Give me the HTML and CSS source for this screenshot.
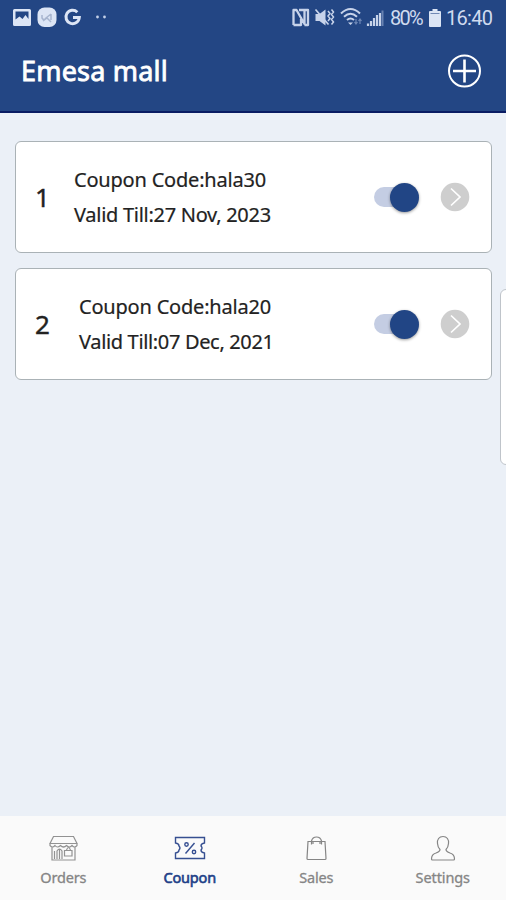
FILE: index.html
```html
<!DOCTYPE html>
<html lang="en">
<head>
<meta charset="utf-8">
<title>Emesa mall</title>
<link rel="stylesheet" href="styles.css">
</head>
<body>
<div class="app">
  <header class="header">
    <div class="status">
      <svg class="status-left" width="110" height="36" viewBox="0 0 110 36">
        <path fill="#dce5f5" fill-rule="evenodd" d="M14.500 9h15a1.500 1.500 0 0 1 1.500 1.500v14a1.500 1.500 0 0 1-1.500 1.500h-15a1.500 1.500 0 0 1-1.500-1.500v-14A1.500 1.500 0 0 1 14.500 9zM15.500 11.500v8l4-3 3 2.500 3-4 3 4v-7.500z"/>
        <rect x="37.500" y="7.500" width="19" height="19.500" rx="7" fill="#dce5f5"/>
        <path d="M42 15v3q2 3 4 0l5-4M43 21l4-3 4 4M51 14v6" fill="none" stroke="#a7b5cf" stroke-width="1.500"/>
        <path d="M77.300 12.200A6.700 6.700 0 1 0 79.300 17.500H73" fill="none" stroke="#dce5f5" stroke-width="3"/>
        <circle cx="97.500" cy="17" r="1.400" fill="#c3d0e8"/><circle cx="104.500" cy="17" r="1.400" fill="#c3d0e8"/>
      </svg>
      <div class="status-right">
        <svg width="93" height="36" viewBox="291 0 93 36">
          <path d="M293.500 25V10h3l8 14V11M299 10h9v15h-3.500M293.500 25h7.500V17" fill="none" stroke="#c7d3ea" stroke-width="2.300" stroke-linejoin="round"/>
          <path d="M315.500 14h4l6-4.500v16l-6-4.500h-4z" fill="#c7d3ea"/>
          <path d="M315.500 9.500l13 15" stroke="#c7d3ea" stroke-width="1.700"/>
          <path d="M328 11l2 2.500-2 2.500 2 2.500-2 2.500M331.500 9.500l2 2.500-2 2.500 2 2.500-2 2.500 2 2.500-2 2.500" fill="none" stroke="#c7d3ea" stroke-width="1.500"/>
          <path d="M341 13.500q9.500-9 19 0M344 16.800q6.500-6 13 0M347 20q3.500-3 7 0" fill="none" stroke="#c7d3ea" stroke-width="2"/>
          <path d="M348 22.500h5l-2.500 2.500z" fill="#c7d3ea"/>
          <path d="M356 19v5M354.500 22l1.500 2 1.500-2M360 24v-5M358.500 21l1.500-2 1.500 2" fill="none" stroke="#6e87b5" stroke-width="1.200"/>
          <path d="M368 26v-2.500M371 26v-5M374 26v-8M377 26v-11M380 26v-13" stroke="#c7d3ea" stroke-width="2.200"/>
          <path d="M382.500 26V10.500" stroke="#6882b2" stroke-width="2"/>
        </svg>
        <span class="battery-text">80%</span>
        <svg class="battery" width="12" height="18" viewBox="0 0 12 18"><path fill="#dce5f5" d="M3.500 0h5v2H11q1 0 1 1v14q0 1-1 1H1q-1 0-1-1V3q0-1 1-1h2.500z"/><path d="M1.500 4.500h9" stroke="#7189b5"/></svg>
        <span class="clock">16:40</span>
      </div>
    </div>
    <div class="titlebar">
      <h1 class="title">Emesa mall</h1>
      <svg width="34" height="34" viewBox="0 0 34 34" fill="none" stroke="#fff"><circle cx="17.500" cy="17" r="15.500" stroke-width="2"/><path d="M17.500 5.500v23M6 17h23" stroke-width="2.600"/></svg>
    </div>
  </header>
  <main class="list">
    <article class="card">
      <div class="index">1</div>
      <div class="info"><p class="code">Coupon Code:hala30</p><p class="date">Valid Till:27 Nov, 2023</p></div>
      <div class="toggle"><span class="knob"></span></div>
      <svg class="arrow" width="30" height="30" viewBox="0 0 30 30" fill="none"><circle cx="15" cy="15" r="14.300" fill="#cecece"/><path d="M11 6.500l9 8.500-9 8.500" stroke="#fff" stroke-width="1.700"/></svg>
    </article>
    <article class="card">
      <div class="index index-wide">2</div>
      <div class="info"><p class="code">Coupon Code:hala20</p><p class="date date-long">Valid Till:07 Dec, 2021</p></div>
      <div class="toggle"><span class="knob"></span></div>
      <svg class="arrow" width="30" height="30" viewBox="0 0 30 30" fill="none"><circle cx="15" cy="15" r="14.300" fill="#cecece"/><path d="M11 6.500l9 8.500-9 8.500" stroke="#fff" stroke-width="1.700"/></svg>
    </article>
  </main>
  <nav class="nav">
    <a class="tab">
      <svg width="34" height="30" viewBox="0 0 34 30" fill="none" stroke="#929292" stroke-width="1.200"><path d="M7.500 3.500h20l3.500 7H4zM4 10.500v2q2.500 3 5 0 2.200 3 5.500 0 3 3 6 0 3 3 5.500 0 2.500 3 5 0v-2M6 14.500V27h23V14.500M11 26v-8q2.500-4 5 0v8M13.500 16v10M18.500 17.500H26V23h-7.500zM20.500 17q2-5 4 0M8.500 26v-8"/></svg>
      <span class="label">Orders</span>
    </a>
    <a class="tab active">
      <svg width="34" height="30" viewBox="0 0 34 30" fill="none" stroke="#364f91" stroke-width="1.400"><path d="M2.500 4.500h29v5.500q-3.500.5-3.500 3 2 2 0 4 0 2.500 3.500 3v5.500h-29V20q3.500-.5 3.500-3 2-2 0-4 0-2.500-3.500-3z"/><path d="M21.500 10L12.500 20.500"/><circle cx="13.500" cy="11.500" r="1.700"/><circle cx="21" cy="19" r="1.700"/></svg>
      <span class="label">Coupon</span>
    </a>
    <a class="tab">
      <svg width="34" height="30" viewBox="0 0 34 30" fill="none" stroke="#858585" stroke-width="1.200"><path d="M9 8.500h17l1 17q0 1-1 1H9q-1 0-1-1zM12.500 11.500V8q1-4 5-4t5 4v3.500M14 11V8.500M21 11V8.500"/></svg>
      <span class="label">Sales</span>
    </a>
    <a class="tab">
      <svg width="34" height="30" viewBox="0 0 34 30" fill="none" stroke="#858585" stroke-width="1.200"><path d="M17 3.500c-4 0-6 3-5.500 7 .2 3 1 4.500 2.500 6 0 2-1 2.500-4 3.500-3.500 1-4.500 3-4.500 6q0 1 1 1h21q1 0 1-1c0-3-1-5-4.500-6-3-1-4-1.500-4-3.500 1.500-1.500 2.300-3 2.500-6 .500-4-1.500-7-5.500-7z"/></svg>
      <span class="label label-long">Settings</span>
    </a>
  </nav>
  <div class="edge-handle"></div>
</div>
</body>
</html>
```
FILE: styles.css
```css
* { box-sizing: border-box; }
body { margin: 0; font-family: "Noto Sans", sans-serif; }
p, h1 { margin: 0; }
.app { position: relative; width: 506px; height: 900px; display: flex; flex-direction: column; background: #ebf0f7; overflow: hidden; }
.header { height: 113px; flex: none; background: #234684; border-bottom: 2px solid #0a1c63; }
.status { height: 36px; display: flex; justify-content: space-between; padding-right: 14px; }
.status-right { display: flex; align-items: center; font-family: Roboto, sans-serif; font-size: 20px; line-height: 36px; color: #d0dbef; white-space: nowrap; }
.battery-text { width: 36px; margin-left: 6px; letter-spacing: -1.7px; }
.battery { margin-left: 3px; }
.clock { width: 46px; margin-left: 5px; letter-spacing: -0.7px; }
.titlebar { height: 70px; display: flex; align-items: center; justify-content: space-between; padding: 0 25px 0 21px; }
.title { color: #fff; font-size: 27px; font-weight: 400; -webkit-text-stroke: 0.8px #fff; line-height: 36px; letter-spacing: 0.2px; }
.list { flex: 1; display: flex; flex-direction: column; gap: 15px; padding: 28px 14px 0 15px; }
.card { height: 112px; display: flex; align-items: center; background: #fff; border: 1.5px solid #aab2b6; border-radius: 6px; padding: 0 21px 0 19px; }
.index { width: 39px; font-size: 26px; -webkit-text-stroke: 0.4px #222; line-height: 36px; color: #222; }
.index-wide { width: 44px; }
.info { flex: 1; font-size: 20px; line-height: 35px; color: #222; -webkit-text-stroke: 0.2px #222; white-space: nowrap; }
.code { letter-spacing: -0.2px; }
.date { letter-spacing: -0.28px; }
.date-long { letter-spacing: -0.34px; }
.toggle { width: 45px; height: 30px; display: flex; align-items: center; justify-content: flex-end; margin-right: 21px; position: relative; }
.toggle::before { content: ""; position: absolute; left: 0; top: 5px; width: 36px; height: 20px; border-radius: 10px; background: #c4cde3; }
.knob { position: relative; width: 29px; height: 29px; border-radius: 50%; background: #214585; box-shadow: 0 1px 3px rgba(0,0,0,.4); }
.nav { height: 84px; flex: none; display: grid; grid-template-columns: repeat(4, 1fr); background: #fafafa; }
.tab { display: flex; flex-direction: column; align-items: center; padding-top: 17px; color: #858585; }
.label { font-size: 14.5px; line-height: 20px; margin-top: 4px; -webkit-text-stroke: 0.3px currentColor; letter-spacing: -0.2px; }
.label-long { letter-spacing: -0.1px; }
.active { color: #213f88; }
.active .label { -webkit-text-stroke-width: 0.6px; }
.edge-handle { position: absolute; left: 500px; top: 289px; width: 12px; height: 176px; background: #fff; border: 1px solid #bfc4ca; border-radius: 7px; }
```
